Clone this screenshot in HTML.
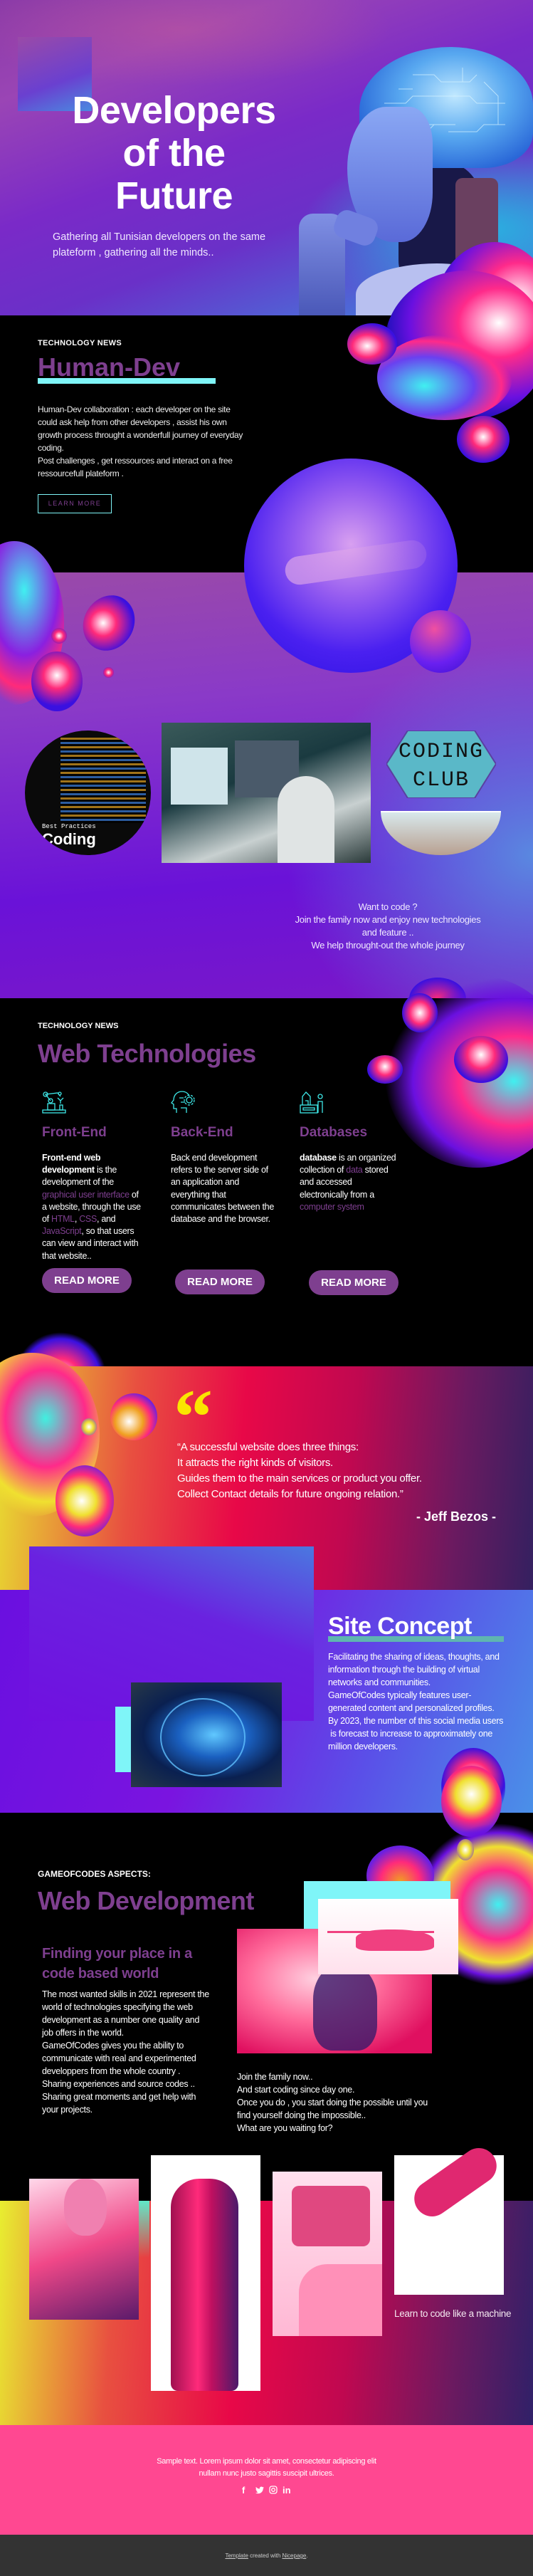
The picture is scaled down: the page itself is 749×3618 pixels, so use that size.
<!DOCTYPE html>
<html><head><meta charset="utf-8"><style>
*{margin:0;padding:0;box-sizing:border-box}
body{width:749px;height:3618px;position:relative;overflow:hidden;background:#000;font-family:"Liberation Sans",sans-serif;color:#fff}
.a{position:absolute}
.blob{position:absolute;border-radius:50%}
.p{font-size:12.5px;line-height:18px;letter-spacing:-0.3px}
.pu{color:#7e3f8f;font-weight:bold}
.btn{position:absolute;background:#7e3f8f;border-radius:18px;color:#fff;font-weight:bold;font-size:15px;text-align:center;line-height:35px;height:35px;width:126px}
</style></head><body>

<!-- HERO -->
<div class="a" style="left:0;top:0;width:749px;height:443px;background:linear-gradient(160deg,#8a3aa8 0%,#9a45b5 20%,#7a2ac8 45%,#6a30c8 65%,#3a8ee0 100%)"></div>
<div class="a" style="left:0;top:0;width:749px;height:443px;background:radial-gradient(ellipse 300px 80px at 250px 40px,rgba(200,90,150,.45),transparent)"></div>
<div class="a" style="left:420px;top:200px;width:329px;height:243px;background:radial-gradient(ellipse at 80% 50%,#2ab0e0,transparent 70%)"></div>
<!-- robot -->
<div class="a" style="left:560px;top:230px;width:120px;height:170px;background:#181848;border-radius:30% 40% 20% 20%"></div>
<div class="a" style="left:640px;top:250px;width:60px;height:160px;background:#6a4060;border-radius:10px"></div>
<div class="blob" style="left:505px;top:66px;width:244px;height:170px;background:radial-gradient(ellipse at 55% 40%,#c0e8ff 0%,#58a8f0 40%,#2a68d8 75%,#3a40b0 100%);border-radius:55% 50% 30% 35%"></div>
<svg class="a" style="left:520px;top:75px" width="220" height="150" viewBox="0 0 220 150" fill="none" stroke="#d8f4ff" stroke-width="1" opacity=".7"><path d="M20 70h30l10-10h30M30 90h40l10 10h40M60 30h30l10 10h40l10-10M90 60h50l10 10h40M110 110h40l10-10h30M40 50h20M130 20v20M160 40l20 20v40M70 120l20-20h20"/></svg>
<div class="blob" style="left:488px;top:150px;width:120px;height:190px;background:linear-gradient(180deg,#8aa8f4,#5a6ad8);border-radius:50% 30% 40% 60%"></div>
<div class="a" style="left:420px;top:300px;width:65px;height:143px;background:linear-gradient(#8090e4,#4a58b8);border-radius:20px 20px 0 0"></div>
<div class="a" style="left:470px;top:300px;width:60px;height:40px;background:#7080e0;border-radius:15px;transform:rotate(20deg)"></div>
<div class="a" style="left:500px;top:370px;width:190px;height:73px;background:#b8c0f0;border-radius:60% 40% 0 0"></div>
<div class="blob" style="left:610px;top:340px;width:170px;height:200px;background:radial-gradient(ellipse at 70% 40%,#fff 0%,#ff2a8a 30%,#6a10e0 60%,#2a10c8 70%,rgba(30,0,150,0) 72%)"></div>
<div class="a" style="left:25px;top:52px;width:104px;height:104px;background:linear-gradient(160deg,#9a4aa8,#6a40d0 60%,#4a8ae0)"></div>
<div class="a" style="left:0;top:125px;width:489px;text-align:center;font-weight:bold;font-size:54px;line-height:60px;letter-spacing:-0.5px">Developers<br>of the<br>Future</div>
<div class="a" style="left:74px;top:322px;font-size:14.5px;line-height:22px;color:#f0e8ff">Gathering all Tunisian developers on the same<br>plateform , gathering all the minds..</div>

<!-- SECTION 2 black -->
<div class="a" style="left:0;top:443px;width:749px;height:361px;background:#000"></div>
<div class="blob" style="left:540px;top:380px;width:230px;height:210px;background:radial-gradient(ellipse at 70% 35%,#fff 0%,#ff2a8a 25%,#6a10e0 55%,#2a10c0 68%,rgba(30,0,150,0) 71%)"></div>
<div class="blob" style="left:530px;top:470px;width:190px;height:120px;background:radial-gradient(ellipse at 35% 60%,#40f0f0 0%,#6a40f0 40%,#ff2a8a 62%,rgba(0,0,0,0) 71%)"></div>
<div class="blob" style="left:488px;top:454px;width:70px;height:58px;background:radial-gradient(ellipse at 40% 55%,#fff,#ff2a7a 35%,#3a10e0 70%)"></div>
<div class="blob" style="left:642px;top:584px;width:74px;height:66px;background:radial-gradient(ellipse at 50% 45%,#fff,#ff2a7a 30%,#3a10e0 70%)"></div>
<div class="a" style="left:53px;top:476px;font-size:11px;font-weight:bold;letter-spacing:.3px">TECHNOLOGY NEWS</div>
<div class="a" style="left:53px;top:531px;width:250px;height:8px;background:#7ff5f8"></div>
<div class="a pu" style="left:53px;top:496px;font-size:36px;line-height:40px">Human-Dev</div>
<div class="a p" style="left:53px;top:566px;width:300px;font-size:12px;color:#eee">Human-Dev collaboration : each developer on the site could ask help from other developers , assist his own growth process throught a wonderfull journey of everyday coding.<br>Post challenges , get ressources and interact on a free ressourcefull plateform .</div>
<div class="a" style="left:53px;top:694px;width:104px;height:27px;border:1px solid #7ff5f8;color:#7e3f8f;font-size:9px;letter-spacing:1.5px;text-align:center;line-height:25px">LEARN MORE</div>

<!-- SECTION 3 purple -->
<div class="a" style="left:0;top:804px;width:749px;height:598px;background:linear-gradient(175deg,#9a4aa8 0%,#8a3ac8 30%,#6a12d8 70%,#7a18c8 100%)"></div>
<div class="a" style="left:400px;top:900px;width:349px;height:502px;background:radial-gradient(ellipse at 100% 60%,#5a88e0 0%,rgba(90,130,230,0) 70%)"></div>
<div class="blob" style="left:343px;top:644px;width:300px;height:301px;background:radial-gradient(circle at 50% 40%,#d8a0f0 0%,#9a60f0 30%,#4a20f0 65%,#2a10e0 100%)"></div>
<div class="a" style="left:400px;top:770px;width:200px;height:40px;background:linear-gradient(90deg,rgba(255,200,230,.5),rgba(180,120,230,.3));border-radius:30px;transform:rotate(-8deg)"></div>
<div class="blob" style="left:576px;top:857px;width:86px;height:88px;background:radial-gradient(circle at 40% 30%,#f050a0,#6a20f0 60%,#3a10d0)"></div>
<div class="blob" style="left:-50px;top:760px;width:140px;height:230px;background:radial-gradient(ellipse at 60% 30%,#40f0f0 0%,#8a20e0 40%,#ff2a7a 60%,rgba(0,0,0,0) 72%)"></div>
<div class="blob" style="left:118px;top:835px;width:70px;height:80px;background:radial-gradient(circle at 40% 55%,#fff,#ff2a7a 30%,#3a10e0 70%);transform:rotate(30deg)"></div>
<div class="blob" style="left:44px;top:915px;width:72px;height:84px;background:radial-gradient(circle at 50% 40%,#fff,#ff2a7a 30%,#3a10e0 70%)"></div>
<div class="blob" style="left:72px;top:882px;width:22px;height:22px;background:radial-gradient(#fff,#ff2a7a 40%,#3a10e0)"></div>
<div class="blob" style="left:145px;top:937px;width:15px;height:15px;background:radial-gradient(#fff,#ff2a7a 40%,#3a10e0)"></div>
<div class="blob" style="left:35px;top:1026px;width:177px;height:175px;background:#0a0a0a;overflow:hidden">
<div class="a" style="left:50px;top:10px;width:120px;height:120px;background:repeating-linear-gradient(180deg,#e0a020 0 3px,#000 3px 6px,#3a80e0 6px 9px,#000 9px 12px);opacity:.7"></div>
<div class="a" style="left:24px;top:130px;font-size:9px;font-family:'Liberation Mono',monospace">Best Practices</div>
<div class="a" style="left:24px;top:140px;font-size:22px;font-weight:bold">Coding</div></div>
<div class="a" style="left:227px;top:1015px;width:294px;height:197px;background:linear-gradient(160deg,#3a5a5a,#1a3a40 40%,#c8d0d0 70%,#2a3a3a)"></div>
<div class="a" style="left:240px;top:1050px;width:80px;height:80px;background:#cfe4ea"></div>
<div class="a" style="left:330px;top:1040px;width:90px;height:80px;background:#4a5a6a"></div>
<div class="a" style="left:390px;top:1090px;width:80px;height:122px;background:#e0e4e4;border-radius:40px 40px 0 0"></div>
<svg class="a" style="left:543px;top:1026px" width="154" height="95" viewBox="0 0 154 95"><polygon points="30,0 124,0 154,47 124,95 30,95 0,47" fill="#5ab8c8" stroke="#5a40a0" stroke-width="2"/></svg>
<div class="a" style="left:543px;top:1036px;width:154px;text-align:center;font-family:'Liberation Mono',monospace;font-size:30px;line-height:40px;color:#111;letter-spacing:2px">CODING<br>CLUB</div>
<div class="a" style="left:535px;top:1139px;width:169px;height:62px;background:linear-gradient(#d8e8ec,#b8a090);border-radius:0 0 85px 85px / 0 0 62px 62px;border-top:2px solid #fff"></div>
<div class="a" style="left:405px;top:1265px;width:280px;text-align:center;font-size:13px;line-height:18px;color:#f0e8ff;letter-spacing:-0.3px">Want to code ?<br>Join the family now and enjoy new technologies and feature ..<br>We help throught-out the whole journey</div>
<div class="blob" style="left:575px;top:1373px;width:80px;height:60px;background:radial-gradient(#ff2a7a,#3a10e0 70%)"></div>

<!-- SECTION 4 black -->
<div class="a" style="left:0;top:1402px;width:749px;height:517px;background:#000"></div>
<div class="blob" style="left:540px;top:1370px;width:260px;height:270px;background:radial-gradient(ellipse at 70% 55%,#40f0f0 0%,#ff2a8a 30%,#6a10e0 55%,rgba(60,0,200,0) 70%)"></div>
<div class="blob" style="left:638px;top:1455px;width:76px;height:66px;background:radial-gradient(circle at 50% 40%,#fff,#ff2a7a 35%,#3a10e0 70%)"></div>
<div class="blob" style="left:516px;top:1482px;width:50px;height:40px;background:radial-gradient(circle at 50% 40%,#fff,#ff2a7a 35%,#3a10e0 70%)"></div>
<div class="blob" style="left:565px;top:1395px;width:50px;height:55px;background:radial-gradient(#fff,#ff2a7a 40%,#3a10e0 70%)"></div>
<div class="a" style="left:53px;top:1435px;font-size:11px;font-weight:bold">TECHNOLOGY NEWS</div>
<div class="a pu" style="left:53px;top:1460px;font-size:36px;line-height:40px;letter-spacing:-0.5px">Web Technologies</div>
<svg class="a" style="left:59px;top:1532px" width="34" height="32" viewBox="0 0 34 32" fill="none" stroke="#3ee8e8" stroke-width="1.3"><rect x="1" y="27" width="32" height="4"/><rect x="8" y="18" width="10" height="9"/><circle cx="12" cy="14" r="3"/><path d="M12 14 L5 5 L22 3 L26 8"/><circle cx="5" cy="5" r="3"/><circle cx="25" cy="4" r="2"/><path d="M22 10 l4 4 l4-4 M26 14 v4"/><rect x="25" y="20" width="4" height="7"/></svg>
<svg class="a" style="left:240px;top:1532px" width="35" height="32" viewBox="0 0 35 32" fill="none" stroke="#3ee8e8" stroke-width="1.3"><path d="M8 31 v-6 h-4 v-6 l-3-2 3-4 c0-8 6-12 12-12 c5 0 9 3 10 7"/><circle cx="26" cy="13" r="4"/><circle cx="26" cy="13" r="7" stroke-dasharray="3 2"/><path d="M12 10 h6 M14 16 h6 M14 24 h8 v7"/></svg>
<svg class="a" style="left:421px;top:1532px" width="34" height="32" viewBox="0 0 34 32" fill="none" stroke="#3ee8e8" stroke-width="1.3"><rect x="1" y="20" width="24" height="11"/><path d="M4 20 V8 l5-6 l6 6 v12 M8 14 h4 v6"/><rect x="5" y="24" width="16" height="3"/><circle cx="29" cy="8" r="3"/><path d="M26 31 v-16 h6 v16"/></svg>
<div class="a pu" style="left:59px;top:1580px;font-size:19px">Front-End</div>
<div class="a pu" style="left:240px;top:1580px;font-size:19px">Back-End</div>
<div class="a pu" style="left:421px;top:1580px;font-size:19px">Databases</div>
<div class="a p" style="left:59px;top:1618px;width:145px;line-height:17.2px"><b>Front-end web development</b> is the development of the <span style="color:#7e3f8f">graphical user interface</span> of a website, through the use of <span style="color:#7e3f8f">HTML</span>, <span style="color:#7e3f8f">CSS</span>, and <span style="color:#7e3f8f">JavaScript</span>, so that users can view and interact with that website..</div>
<div class="a p" style="left:240px;top:1618px;width:145px;line-height:17.2px">Back end development refers to the server side of an application and everything that communicates between the database and the browser.</div>
<div class="a p" style="left:421px;top:1618px;width:140px;line-height:17.2px"><b>database</b> is an organized collection of <span style="color:#7e3f8f">data</span> stored and accessed electronically from a <span style="color:#7e3f8f">computer system</span></div>
<div class="btn" style="left:59px;top:1781px">READ MORE</div>
<div class="btn" style="left:246px;top:1783px">READ MORE</div>
<div class="btn" style="left:434px;top:1784px">READ MORE</div>
<div class="blob" style="left:20px;top:1870px;width:130px;height:110px;background:radial-gradient(circle at 50% 60%,#fff,#ff2a7a 30%,#3a10e0 60%,rgba(0,0,0,0) 70%)"></div>

<!-- QUOTE -->
<div class="a" style="left:0;top:1919px;width:749px;height:314px;background:linear-gradient(95deg,#e8e030 0%,#e85040 25%,#e80848 45%,#c00850 65%,#6a1a60 85%,#342060 100%)"></div>
<div class="blob" style="left:-50px;top:1900px;width:190px;height:230px;background:radial-gradient(ellipse at 60% 40%,#40f0e0 0%,#ff2a8a 35%,#f0e030 60%,rgba(240,220,40,0) 72%)"></div>
<div class="blob" style="left:155px;top:1957px;width:66px;height:66px;background:radial-gradient(circle at 40% 60%,#fff,#f0a020 35%,#ff2a7a 55%,#6a20e0 75%)"></div>
<div class="blob" style="left:78px;top:2058px;width:82px;height:100px;background:radial-gradient(circle at 45% 50%,#fff,#f0e030 30%,#ff2a7a 55%,#6a20e0 80%)"></div>
<div class="blob" style="left:114px;top:1992px;width:22px;height:24px;background:radial-gradient(#fff,#f0e030 40%,#6a20e0)"></div>
<div class="a" style="left:244px;top:1935px;font-size:110px;line-height:110px;font-family:'Liberation Serif',serif;font-weight:bold;color:#fae600">&ldquo;</div>
<div class="a" style="left:249px;top:2022px;font-size:15px;line-height:22px;letter-spacing:-0.3px"> &ldquo;A successful website does three things:<br>It attracts the right kinds of visitors.<br>Guides them to the main services or product you offer.<br>Collect Contact details for future ongoing relation.&rdquo;</div>
<div class="a" style="left:450px;top:2120px;width:247px;text-align:right;font-size:18px;font-weight:bold">- Jeff Bezos -</div>

<!-- SITE CONCEPT -->
<div class="a" style="left:0;top:2233px;width:749px;height:313px;background:linear-gradient(110deg,#6a10e0 0%,#7a14e0 40%,#5a50e8 70%,#4a90e8 100%)"></div>
<div class="a" style="left:41px;top:2172px;width:400px;height:245px;background:linear-gradient(200deg,#4a78e0 0%,#6a22e0 40%,#7010e0 100%)"></div>
<div class="a" style="left:162px;top:2397px;width:22px;height:92px;background:#7ff5f8"></div>
<div class="a" style="left:184px;top:2363px;width:212px;height:147px;background:radial-gradient(ellipse at 55% 50%,#60c8ff 0%,#1a60c0 30%,#0a2050 60%,#283848 100%)"></div>
<div class="a" style="left:225px;top:2385px;width:120px;height:110px;border:2px solid #60c0ff;border-radius:50%;opacity:.8"></div>
<div class="a" style="left:461px;top:2298px;width:247px;height:8px;background:#5fb5b0"></div>
<div class="a" style="left:461px;top:2264px;font-size:34px;font-weight:bold;line-height:40px;letter-spacing:-0.5px">Site Concept</div>
<div class="a p" style="left:461px;top:2318px;width:250px;line-height:18px">Facilitating the sharing of ideas, thoughts, and information through the building of virtual networks and communities.<br>GameOfCodes typically features user-generated content and personalized profiles.<br>By 2023, the number of this social media users &nbsp;is forecast to increase to approximately one million developers.</div>
<div class="blob" style="left:620px;top:2455px;width:90px;height:110px;background:radial-gradient(circle at 50% 40%,#fff,#ff2a7a 30%,#3a10e0 55%,#40f0f0 80%)"></div>

<!-- WEB DEVELOPMENT -->
<div class="a" style="left:0;top:2546px;width:749px;height:545px;background:#000"></div>
<div class="blob" style="left:620px;top:2480px;width:85px;height:100px;background:radial-gradient(circle at 50% 40%,#fff,#f0e030 30%,#ff2a7a 50%,#6a20e0 75%)"></div>
<div class="blob" style="left:580px;top:2560px;width:240px;height:230px;background:radial-gradient(ellipse at 50% 50%,#40f0f0 0%,#ff2a8a 30%,#f0e030 50%,#6a10e0 62%,rgba(0,0,0,0) 70%)"></div>
<div class="blob" style="left:515px;top:2592px;width:95px;height:85px;background:radial-gradient(circle at 50% 60%,#f0a020,#ff2a7a 40%,#6a20e0 70%)"></div>
<div class="blob" style="left:642px;top:2583px;width:24px;height:30px;background:radial-gradient(#fff,#f0e030 40%,#6a20e0)"></div>
<div class="a" style="left:53px;top:2625px;font-size:12px;font-weight:bold">GAMEOFCODES ASPECTS:</div>
<div class="a pu" style="left:53px;top:2650px;font-size:36px;line-height:40px;letter-spacing:-0.5px">Web Development</div>
<div class="a" style="left:427px;top:2642px;width:206px;height:114px;background:#7ff5f8"></div>
<div class="a" style="left:333px;top:2709px;width:274px;height:175px;background:radial-gradient(ellipse at 40% 40%,#ffd0e0 0%,#ff6a9a 40%,#e01060 80%)"></div>
<div class="a" style="left:440px;top:2760px;width:90px;height:120px;background:#3a1a6a;border-radius:40% 40% 30% 30%;opacity:.8"></div>
<div class="a" style="left:447px;top:2667px;width:197px;height:106px;background:linear-gradient(#fff,#ffe0ec)"></div>
<div class="a" style="left:500px;top:2710px;width:110px;height:30px;background:#f04080;border-radius:40% 50% 20% 20%"></div>
<div class="a" style="left:460px;top:2712px;width:150px;height:3px;background:#f04080"></div>
<div class="a pu" style="left:59px;top:2730px;font-size:20px;line-height:28px;letter-spacing:-0.3px">Finding your place in a<br>code based world</div>
<div class="a p" style="left:59px;top:2792px;width:240px;line-height:18px">The most wanted skills in 2021 represent the world of technologies specifying the web development as a number one quality and job offers in the world.<br>GameOfCodes gives you the ability to communicate with real and experimented developpers from the whole country .<br>Sharing experiences and source codes ..<br>Sharing great moments and get help with your projects.</div>
<div class="a p" style="left:333px;top:2908px;width:280px;line-height:18px">Join the family now..<br>And start coding since day one.<br>Once you do , you start doing the possible until you find yourself doing the impossible..<br>What are you waiting for?</div>

<!-- GALLERY -->
<div class="a" style="left:0;top:3091px;width:749px;height:315px;background:linear-gradient(95deg,#e8ee30 0%,#e85040 22%,#e80848 45%,#c00850 65%,#6a1a60 85%,#302068 100%)"></div>
<div class="a" style="left:150px;top:3091px;width:60px;height:80px;background:linear-gradient(#60e8c8,rgba(96,232,200,0))"></div>
<div class="a" style="left:41px;top:3060px;width:154px;height:198px;background:linear-gradient(160deg,#ffd8ea,#f04888 50%,#5a1a6a)"></div>
<div class="a" style="left:90px;top:3060px;width:60px;height:80px;background:#f080b0;border-radius:45%"></div>
<div class="a" style="left:212px;top:3027px;width:154px;height:331px;background:#fff"></div>
<div class="a" style="left:240px;top:3060px;width:95px;height:298px;background:linear-gradient(90deg,#a01050,#ff2a7a 40%,#c01060 60%,#4a1a6a);border-radius:40px 40px 10px 10px"></div>
<div class="a" style="left:383px;top:3050px;width:154px;height:231px;background:linear-gradient(#ffe0ee,#ffb8d4)"></div>
<div class="a" style="left:410px;top:3070px;width:110px;height:85px;background:#e04880;border-radius:10px"></div>
<div class="a" style="left:420px;top:3180px;width:117px;height:101px;background:#ff90b8;border-radius:40px 0 0 0"></div>
<div class="a" style="left:554px;top:3027px;width:154px;height:196px;background:#fff"></div>
<div class="a" style="left:575px;top:3040px;width:130px;height:50px;background:#e02870;border-radius:30px;transform:rotate(-35deg)"></div>
<div class="a" style="left:554px;top:3242px;font-size:13.5px;color:#f4e8f0;letter-spacing:-0.3px">Learn to code like a machine</div>

<!-- FOOTER -->
<div class="a" style="left:0;top:3406px;width:749px;height:154px;background:#ff4891"></div>
<div class="a" style="left:0;top:3449px;width:749px;text-align:center;font-size:11px;line-height:17px;letter-spacing:-0.3px">Sample text. Lorem ipsum dolor sit amet, consectetur adipiscing elit<br>nullam nunc justo sagittis suscipit ultrices.</div>
<div class="a" style="left:340px;top:3490px;font-size:13px;font-weight:bold;letter-spacing:9px">f</div>
<svg class="a" style="left:359px;top:3492px" width="12" height="11" viewBox="0 0 24 20"><path fill="#fff" d="M24 2.4a10 10 0 0 1-2.8.8A5 5 0 0 0 23.3.4a10 10 0 0 1-3.1 1.2A4.9 4.9 0 0 0 11.8 6 14 14 0 0 1 1.7.9a4.9 4.9 0 0 0 1.5 6.6A4.9 4.9 0 0 1 1 6.9a4.9 4.9 0 0 0 3.9 4.8 5 5 0 0 1-2.2.1 4.9 4.9 0 0 0 4.6 3.4A9.9 9.9 0 0 1 0 17.3 14 14 0 0 0 7.5 19.5c9 0 14-7.5 14-14v-.6A10 10 0 0 0 24 2.4z"/></svg>
<svg class="a" style="left:378px;top:3491px" width="12" height="12" viewBox="0 0 12 12" fill="none" stroke="#fff" stroke-width="1.3"><rect x="1" y="1" width="10" height="10" rx="3"/><circle cx="6" cy="6" r="2.3"/></svg>
<div class="a" style="left:397px;top:3490px;font-size:13px;font-weight:bold">in</div>
<div class="a" style="left:0;top:3560px;width:749px;height:58px;background:#333"></div>
<div class="a" style="left:0;top:3585px;width:749px;text-align:center;font-size:8px;color:#ccc"><u>Template</u> created with <u>Nicepage</u>.</div>
</body></html>
